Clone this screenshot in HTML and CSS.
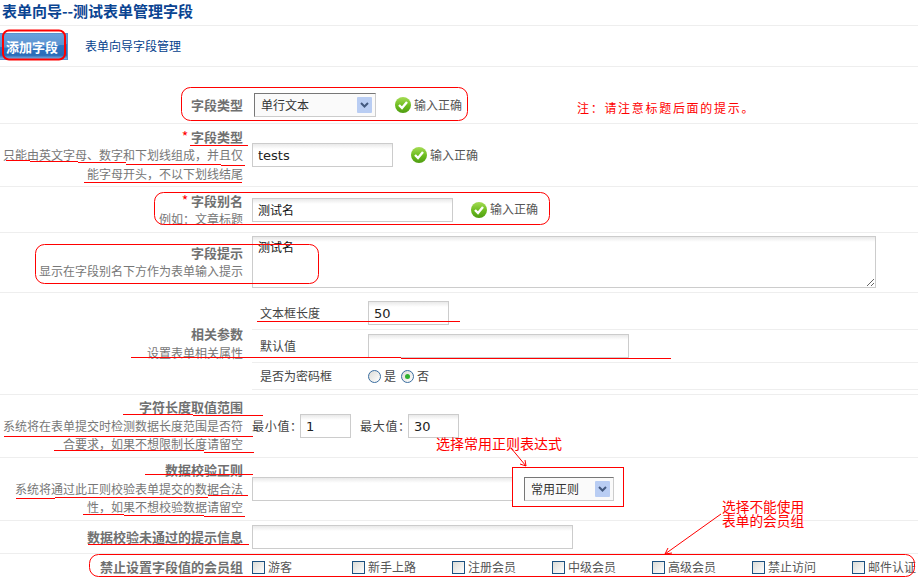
FILE: index.html
```html
<!DOCTYPE html>
<html lang="zh">
<head>
<meta charset="utf-8">
<title>表单向导</title>
<link rel="stylesheet" href="styles.css">
</head>
<body>
<div class="page">
  <svg class="defs" width="0" height="0"><defs>
    <linearGradient id="okFill" x1="0" y1="0" x2="0" y2="1"><stop offset="0" stop-color="#a5dc55"/><stop offset="0.55" stop-color="#6cbb1e"/><stop offset="1" stop-color="#4f9d12"/></linearGradient>
    <symbol id="okIcon" viewBox="0 0 16 16"><circle cx="8" cy="8" r="8" fill="url(#okFill)"/><path d="M4 8l3 3 5-6" fill="none" stroke="#fff" stroke-width="2.400"/></symbol>
    <symbol id="arrowIcon" viewBox="0 0 15 16"><rect width="15" height="16" rx="1" fill="#b9cdf3"/><path d="M4 6l3.500 3.500L11 6" fill="none" stroke="#43597f" stroke-width="2"/></symbol>
  </defs></svg>
  <h1 class="title">表单向导--测试表单管理字段</h1>
  <div class="tabs">
    <a class="tab-active">添加字段</a>
    <a class="tab-link">表单向导字段管理</a>
  </div>

  <div class="row row-type">
    <div class="label"><b>字段类型</b></div>
    <div class="field field-type">
      <div class="select select-wide"><span>单行文本</span><svg class="arrow"><use href="#arrowIcon"/></svg></div>
      <span class="ok ok-a"><svg class="check"><use href="#okIcon"/></svg>输入正确</span>
    </div>
  </div>

  <div class="row row-tall">
    <div class="label"><i>*</i> <b>字段类型</b><br>只能由英文字母、数字和下划线组成，并且仅<br>能字母开头，不以下划线结尾</div>
    <div class="field">
      <input class="input w-141" value="tests">
      <span class="ok ok-b"><svg class="check"><use href="#okIcon"/></svg>输入正确</span>
    </div>
  </div>

  <div class="row row-alias">
    <div class="label"><i>*</i> <b>字段别名</b><br>例如：文章标题</div>
    <div class="field">
      <input class="input input-zh w-201" value="测试名">
      <span class="ok ok-b"><svg class="check"><use href="#okIcon"/></svg>输入正确</span>
    </div>
  </div>

  <div class="row row-hint">
    <div class="label"><b>字段提示</b><br>显示在字段别名下方作为表单输入提示</div>
    <div class="field"><textarea class="input input-zh area">测试名</textarea></div>
  </div>

  <div class="row row-params">
    <div class="label"><b>相关参数</b><br>设置表单相关属性</div>
    <div class="subs">
      <div class="sub sub-a"><span class="sub-name">文本框长度</span><input class="input w-81" value="50"></div>
      <div class="sub sub-b"><span class="sub-name">默认值</span><input class="input w-261"></div>
      <div class="sub sub-c"><span class="sub-name">是否为密码框</span><span class="radio"></span><span class="radio-text">是</span><span class="radio radio-on"></span><span class="radio-text">否</span></div>
    </div>
  </div>

  <div class="row row-tall">
    <div class="label"><b>字符长度取值范围</b><br>系统将在表单提交时检测数据长度范围是否符<br>合要求，如果不想限制长度请留空</div>
    <div class="field">
      <span class="range-name">最小值：</span><input class="input w-51" value="1">
      <span class="range-name range-gap">最大值：</span><input class="input w-51" value="30">
    </div>
  </div>

  <div class="row row-tall">
    <div class="label"><b>数据校验正则</b><br>系统将通过此正则校验表单提交的数据合法<br>性，如果不想校验数据请留空</div>
    <div class="field">
      <input class="input w-261 w-regex">
      <div class="select select-narrow"><span>常用正则</span><svg class="arrow"><use href="#arrowIcon"/></svg></div>
    </div>
  </div>

  <div class="row row-msg">
    <div class="label"><b>数据校验未通过的提示信息</b></div>
    <div class="field"><input class="input w-321"></div>
  </div>

  <div class="row row-groups">
    <div class="label"><b>禁止设置字段值的会员组</b></div>
    <div class="field groups">
      <span class="group"><span class="box"></span>游客</span>
      <span class="group"><span class="box"></span>新手上路</span>
      <span class="group"><span class="box"></span>注册会员</span>
      <span class="group"><span class="box"></span>中级会员</span>
      <span class="group"><span class="box"></span>高级会员</span>
      <span class="group"><span class="box"></span>禁止访问</span>
      <span class="group"><span class="box"></span>邮件认证</span>
    </div>
  </div>

  <svg class="marks" viewBox="0 0 918 580" shape-rendering="crispEdges">
    <g fill="none" stroke="#f00" stroke-width="1">
      <rect x="3" y="30.500" width="62" height="29" rx="6" stroke-width="2" shape-rendering="auto"/>
      <rect x="181.500" y="87.500" width="286" height="33" rx="9" shape-rendering="auto"/>
      <rect x="154.500" y="192.500" width="395" height="32" rx="9" shape-rendering="auto"/>
      <rect x="35.500" y="244.500" width="283" height="39" rx="9" shape-rendering="auto"/>
      <rect x="89.500" y="554.500" width="825" height="22" rx="9" shape-rendering="auto"/>
      <path d="M190 145.500h58M6 160.500h24M30 161.500h48M78 162.500h48M126 164.500h95M221 165.500h24M84 182.500h158M257 321.500h203M131 357.500h270M401 358.500h270M123 414.500h70M193 415.500h70M4 436.500h249M54 450.500h50M104 450.500h100M204 452.500h50M145 474.500h108M16 498.500h39M55 497.500h153M208 495.500h40M83 514.500h41M124 515.500h80M204 516.500h41M88 544.500h161"/>
    </g>
    <g fill="none" stroke="#f00" shape-rendering="auto">
      <path d="M511 448L526 466M526 466l-6-2M526 466l-1-6"/>
      <path d="M721 514L665 554M665 554l7-1M665 554l3-6"/>
    </g>
  </svg>
  <div class="regex-frame"></div>
  <div class="note note-main">注：请注意标题后面的提示。</div>
  <div class="note note-regex">选择常用正则表达式</div>
  <div class="note note-group">选择不能使用<br>表单的会员组</div>
</div>
</body>
</html>
```
FILE: styles.css
```css
* { box-sizing: border-box; }
html, body { margin: 0; padding: 0; }
body {
  width: 918px;
  height: 580px;
  overflow: hidden;
  background: #fff;
  font: 12px/18.5px "Noto Sans CJK SC", "Noto Sans", sans-serif;
  color: #444;
}
.page { position: relative; width: 918px; height: 580px; overflow: hidden; }
.defs { position: absolute; }
.title {
  margin: 0;
  height: 26px;
  padding-left: 2px;
  border-bottom: 1px solid #eee;
  font-size: 15px;
  font-weight: 700;
  line-height: 22px;
  color: #0a4492;
}
.tabs {
  display: flex;
  align-items: center;
  height: 41px;
  border-bottom: 1px solid #eee;
}
.tab-active {
  width: 68px;
  height: 27px;
  padding-right: 3px;
  line-height: 26px;
  text-align: center;
  font-size: 13px;
  font-weight: 700;
  color: #fff;
  background:
    radial-gradient(ellipse 70px 14px at 20px 0, rgba(255,255,255,0.22) 98%, transparent 100%),
    linear-gradient(#3f86d4, #2f76c4 45%, #2a6cb8 85%, #86b5e6);
  border: 1px solid #5b93cf;
  border-left: 0;
}
.tab-link { margin-left: 17px; color: #04418d; }

.row {
  display: grid;
  grid-template-columns: 243px 1fr;
  column-gap: 9px;
  align-items: center;
  border-bottom: 1px solid #eee;
}
.row-type { height: 57px; padding-top: 20px; }
.row-tall { height: 63px; }
.row-alias { height: 46px; }
.row-hint { height: 60px; padding-bottom: 1px; }
.row-params { height: 102px; }
.row-msg { height: 33px; }
.row-groups { height: 27px; border-bottom: 0; }

.label { text-align: right; color: #777; white-space: nowrap; }
.label b { color: #707070; font-size: 13px; font-weight: 700; }
.label i { color: #f00; font-style: normal; font-size: 14px; }

.field { display: flex; align-items: center; }
.field-type { padding-left: 2px; }

.input {
  height: 24px;
  margin: 0;
  padding: 0 5px;
  border: 1px solid #ccc;
  border-radius: 0;
  outline: 0;
  background: linear-gradient(#e9e9e9, #fff 5px);
  font: 13px/20px "DejaVu Sans", "Noto Sans CJK SC", sans-serif;
  color: #222;
}
.input-zh { font-size: 12px; color: #111; }
.w-141 { width: 141px; }
.w-201 { width: 201px; }
.w-81 { width: 81px; }
.w-261 { width: 261px; }
.w-51 { width: 51px; }
.w-321 { width: 321px; }
.w-regex { width: 272px; }
.area {
  display: block;
  width: 624px;
  height: 52px;
  padding: 3px 5px;
  line-height: 16px;
  resize: both;
}

.select {
  display: flex;
  align-items: center;
  justify-content: space-between;
  height: 24px;
  padding: 0 3px 0 6px;
  border: 1px solid #ccc;
  border-left-color: #777;
  border-top-color: #777;
  background: #fafafa;
  color: #333;
}
.select-wide { width: 122px; }
.select-narrow { position: relative; z-index: 2; width: 90px; }
.arrow { display: block; width: 15px; height: 16px; }

.ok { display: flex; align-items: center; color: #555; }
.ok-a { margin-left: 19px; }
.ok-b { margin-left: 18px; }
.check { display: block; width: 16px; height: 16px; margin-right: 3px; }

.subs { align-self: start; }
.sub {
  display: flex;
  align-items: center;
  padding-left: 8px;
  border-bottom: 1px solid #eee;
}
.sub-a { height: 37px; padding-top: 4px; }
.sub-b { height: 33px; }
.sub-c { height: 27px; }
.sub-name { width: 108px; }
.radio {
  width: 13px;
  height: 13px;
  border: 1px solid #3a6d9f;
  border-radius: 50%;
  background: linear-gradient(135deg, #dcdcd7, #fff);
}
.radio-on { position: relative; }
.radio-on::after {
  content: "";
  position: absolute;
  left: 3px;
  top: 3px;
  width: 5px;
  height: 5px;
  border-radius: 50%;
  background: #2fb02f;
}
.radio-text { margin: 0 5px 0 3px; }
.radio-text:last-child { margin-right: 0; }

.range-name { width: 48px; white-space: nowrap; letter-spacing: 0.700px; }
.range-gap { margin-left: 9px; }

.groups { gap: 0; white-space: nowrap; }
.group { display: flex; align-items: center; width: 100px; flex: none; color: #555; }
.box {
  width: 13px;
  height: 13px;
  margin-right: 3px;
  border: 1px solid #1c5180;
  background: linear-gradient(135deg, #dcdcd7, #fff);
}

.marks { position: absolute; left: 0; top: 0; width: 918px; height: 580px; pointer-events: none; z-index: 3; }
.regex-frame {
  position: absolute;
  left: 512px;
  top: 467px;
  width: 112px;
  height: 40px;
  border: 1px solid #f00;
  background: #fff;
  z-index: 1;
}
.note { position: absolute; color: #f00; white-space: nowrap; z-index: 3; }
.note-main { left: 577px; top: 99px; letter-spacing: 1.700px; }
.note-regex { left: 436px; top: 434px; font-size: 14px; line-height: 18px; }
.note-group { left: 722px; top: 500px; font-size: 13.700px; line-height: 13.500px; }
```
